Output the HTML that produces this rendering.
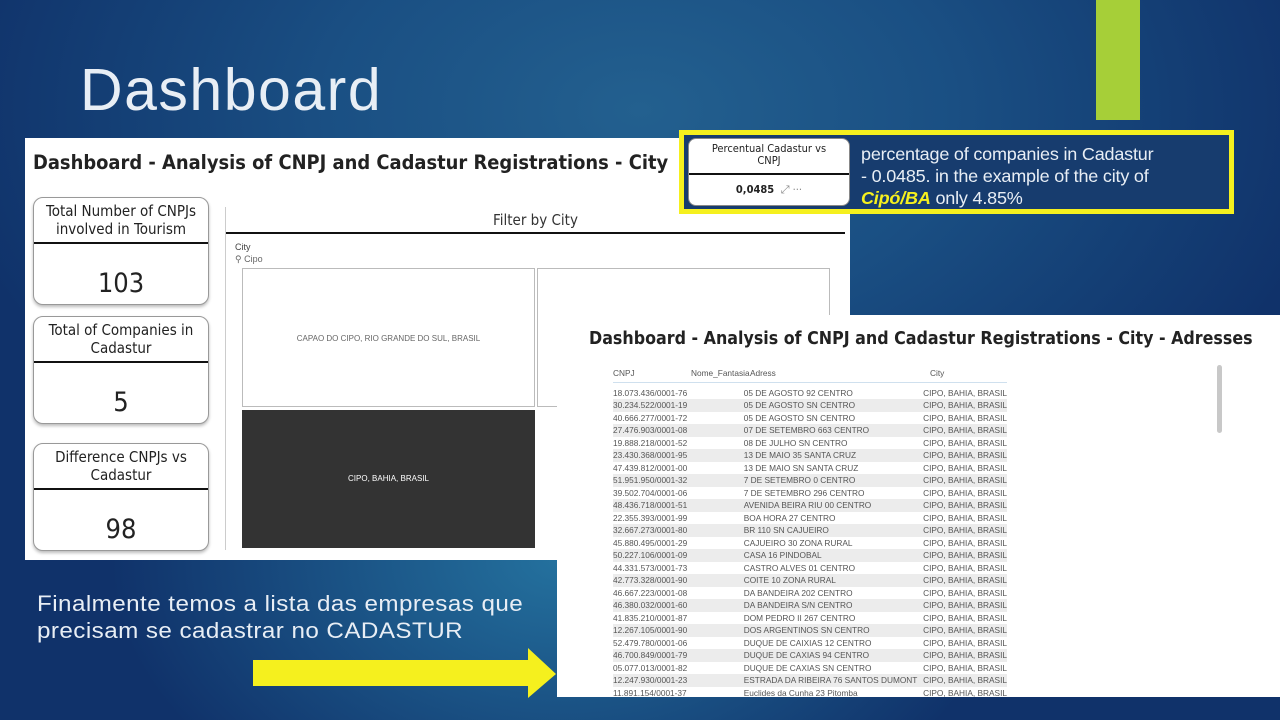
<!DOCTYPE html>
<html><head><meta charset="utf-8"><style>
*{margin:0;padding:0;box-sizing:border-box}
body{width:1280px;height:720px;overflow:hidden;position:relative;font-family:"Liberation Sans",sans-serif;
background:radial-gradient(ellipse 450px 300px at 560px 560px,#24719e 0%,rgba(30,100,150,0) 100%),radial-gradient(ellipse 700px 450px at 640px 110px,#23608f 0%,#1a4f83 45%,#143f75 75%,#10326a 100%);}
.abs{position:absolute}
.card{position:absolute;left:33px;width:176px;background:#fff;border:1px solid #999;border-radius:10px;box-shadow:0 2px 3px #bbb;text-align:center;color:#222;font-family:"DejaVu Sans Condensed","Liberation Sans Narrow",sans-serif}
.card .t{font-size:15px;line-height:18px;padding-top:4px;height:46px;border-bottom:2px solid #111}
.card .v{font-size:27px;padding-top:24px}
table{border-collapse:collapse;font-size:8.3px;color:#555}
td{height:12.5px;padding:0;white-space:nowrap}
tr:nth-child(even) td{background:#ececec}
</style></head><body>
<div class="abs" style="left:80px;top:56px;font-size:59px;color:#e8eef5;letter-spacing:1.5px">Dashboard</div>
<div class="abs" style="left:1096px;top:0;width:44px;height:120px;background:#a6cf38"></div>

<div class="abs" style="left:25px;top:138px;width:825px;height:422px;background:#fff"></div>
<div class="abs" style="left:33px;top:151px;font-size:19.5px;font-weight:bold;color:#222;font-family:'DejaVu Sans Condensed',sans-serif;transform:scaleX(1.02);transform-origin:left">Dashboard - Analysis of CNPJ and Cadastur Registrations - City</div>
<div class="card" style="top:197px;height:108px"><div class="t">Total Number of CNPJs involved in Tourism</div><div class="v">103</div></div>
<div class="card" style="top:316px;height:108px"><div class="t">Total of Companies in Cadastur</div><div class="v">5</div></div>
<div class="card" style="top:443px;height:108px"><div class="t">Difference CNPJs vs Cadastur</div><div class="v">98</div></div>
<div class="abs" style="left:225px;top:207px;width:620px;height:343px;border-left:1px solid #ccc">
 <div style="height:27px;border-bottom:2px solid #111;text-align:center;font-size:15px;padding-top:4px;color:#333;font-family:'DejaVu Sans Condensed',sans-serif">Filter by City</div>
 <div style="font-size:9px;color:#444;margin:8px 0 0 9px">City</div>
 <div style="font-size:9px;color:#666;margin:2px 0 0 9px">⚲ Cipo</div>
</div>
<div class="abs" style="left:242px;top:268px;width:293px;height:139px;border:1px solid #bbb;font-size:8px;color:#666;text-align:center;line-height:139px">CAPAO DO CIPO, RIO GRANDE DO SUL, BRASIL</div>
<div class="abs" style="left:537px;top:268px;width:293px;height:139px;border:1px solid #bbb"></div>
<div class="abs" style="left:242px;top:410px;width:293px;height:138px;background:#333;font-size:8px;color:#fff;text-align:center;line-height:138px">CIPO, BAHIA, BRASIL</div>

<div class="abs" style="left:679px;top:130px;width:555px;height:84px;border:5px solid #f5f01e;background:#173c6e"></div>
<div class="abs" style="left:688px;top:138px;width:162px;height:68px;background:#fff;border:1px solid #888;border-radius:8px;text-align:center;font-size:11px;color:#222;font-family:'DejaVu Sans Condensed',sans-serif">
 <div style="height:36px;border-bottom:2px solid #111;padding-top:4px;line-height:12px">Percentual Cadastur vs<br>CNPJ</div>
 <div style="font-weight:bold;padding-top:8px">0,0485 <span style="font-weight:normal;color:#888">&nbsp;⤢ ···</span></div>
</div>
<div class="abs" style="left:861px;top:143px;font-size:17.5px;line-height:22px;color:#e8eef5;width:370px;letter-spacing:-0.2px;transform:scaleX(1.03);transform-origin:left">percentage of companies in Cadastur<br>- 0.0485. in the example of the city of<br><b style="color:#f5f01e;font-style:italic">Cipó/BA</b> only 4.85%</div>

<div class="abs" style="left:557px;top:315px;width:723px;height:382px;background:#fff"></div>
<div class="abs" style="left:589px;top:329px;font-size:17.5px;font-weight:bold;color:#222;font-family:'DejaVu Sans Condensed',sans-serif;transform:scaleX(1.01);transform-origin:left">Dashboard - Analysis of CNPJ and Cadastur Registrations - City - Adresses</div>
<div class="abs" style="left:1217px;top:365px;width:5px;height:68px;background:#c8c8c8;border-radius:3px"></div>
<div class="abs" style="left:613px;top:365px;width:394px">
<table style="width:394px">
<tr><td style="width:78px;height:17px;border-bottom:1px solid #cfe0ee">CNPJ</td><td style="width:59px;border-bottom:1px solid #cfe0ee">Nome_Fantasia</td><td style="width:180px;border-bottom:1px solid #cfe0ee">Adress</td><td style="border-bottom:1px solid #cfe0ee">City</td></tr>
</table>
<table style="width:394px;margin-top:4px">
<tr><td style="width:137px">18.073.436/0001-76</td><td style="width:180px">05 DE AGOSTO 92 CENTRO</td><td>CIPO, BAHIA, BRASIL</td></tr>
<tr><td>30.234.522/0001-19</td><td>05 DE AGOSTO SN CENTRO</td><td>CIPO, BAHIA, BRASIL</td></tr>
<tr><td>40.666.277/0001-72</td><td>05 DE AGOSTO SN CENTRO</td><td>CIPO, BAHIA, BRASIL</td></tr>
<tr><td>27.476.903/0001-08</td><td>07 DE SETEMBRO 663 CENTRO</td><td>CIPO, BAHIA, BRASIL</td></tr>
<tr><td>19.888.218/0001-52</td><td>08 DE JULHO SN CENTRO</td><td>CIPO, BAHIA, BRASIL</td></tr>
<tr><td>23.430.368/0001-95</td><td>13 DE MAIO 35 SANTA CRUZ</td><td>CIPO, BAHIA, BRASIL</td></tr>
<tr><td>47.439.812/0001-00</td><td>13 DE MAIO SN SANTA CRUZ</td><td>CIPO, BAHIA, BRASIL</td></tr>
<tr><td>51.951.950/0001-32</td><td>7 DE SETEMBRO 0 CENTRO</td><td>CIPO, BAHIA, BRASIL</td></tr>
<tr><td>39.502.704/0001-06</td><td>7 DE SETEMBRO 296 CENTRO</td><td>CIPO, BAHIA, BRASIL</td></tr>
<tr><td>48.436.718/0001-51</td><td>AVENIDA BEIRA RIU 00 CENTRO</td><td>CIPO, BAHIA, BRASIL</td></tr>
<tr><td>22.355.393/0001-99</td><td>BOA HORA 27 CENTRO</td><td>CIPO, BAHIA, BRASIL</td></tr>
<tr><td>32.667.273/0001-80</td><td>BR 110 SN CAJUEIRO</td><td>CIPO, BAHIA, BRASIL</td></tr>
<tr><td>45.880.495/0001-29</td><td>CAJUEIRO 30 ZONA RURAL</td><td>CIPO, BAHIA, BRASIL</td></tr>
<tr><td>50.227.106/0001-09</td><td>CASA 16 PINDOBAL</td><td>CIPO, BAHIA, BRASIL</td></tr>
<tr><td>44.331.573/0001-73</td><td>CASTRO ALVES 01 CENTRO</td><td>CIPO, BAHIA, BRASIL</td></tr>
<tr><td>42.773.328/0001-90</td><td>COITE 10 ZONA RURAL</td><td>CIPO, BAHIA, BRASIL</td></tr>
<tr><td>46.667.223/0001-08</td><td>DA BANDEIRA 202 CENTRO</td><td>CIPO, BAHIA, BRASIL</td></tr>
<tr><td>46.380.032/0001-60</td><td>DA BANDEIRA S/N CENTRO</td><td>CIPO, BAHIA, BRASIL</td></tr>
<tr><td>41.835.210/0001-87</td><td>DOM PEDRO II 267 CENTRO</td><td>CIPO, BAHIA, BRASIL</td></tr>
<tr><td>12.267.105/0001-90</td><td>DOS ARGENTINOS SN CENTRO</td><td>CIPO, BAHIA, BRASIL</td></tr>
<tr><td>52.479.780/0001-06</td><td>DUQUE DE CAIXIAS 12 CENTRO</td><td>CIPO, BAHIA, BRASIL</td></tr>
<tr><td>46.700.849/0001-79</td><td>DUQUE DE CAXIAS 94 CENTRO</td><td>CIPO, BAHIA, BRASIL</td></tr>
<tr><td>05.077.013/0001-82</td><td>DUQUE DE CAXIAS SN CENTRO</td><td>CIPO, BAHIA, BRASIL</td></tr>
<tr><td>12.247.930/0001-23</td><td>ESTRADA DA RIBEIRA 76 SANTOS DUMONT</td><td>CIPO, BAHIA, BRASIL</td></tr>
<tr><td>11.891.154/0001-37</td><td>Euclides da Cunha 23 Pitomba</td><td>CIPO, BAHIA, BRASIL</td></tr>
</table></div>

<div class="abs" style="left:37px;top:590px;font-size:22px;line-height:27px;color:#e8eef5;letter-spacing:0.4px;transform:scaleX(1.1);transform-origin:left">Finalmente temos a lista das empresas que<br>precisam se cadastrar no CADASTUR</div>
<svg class="abs" style="left:253px;top:648px" width="305" height="52"><polygon points="0,12 275,12 275,0 303,26 275,50 275,38 0,38" fill="#f5f01e"/></svg>
</body></html>
